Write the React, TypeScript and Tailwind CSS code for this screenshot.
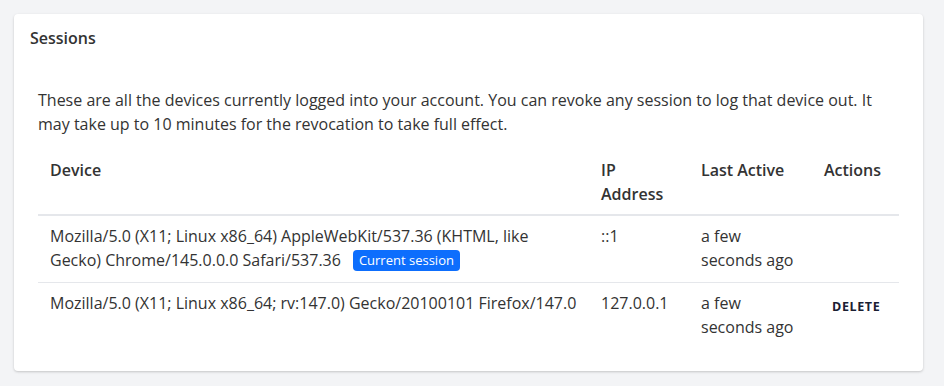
export default function App() {
  const sessions = [
    {
      device:
        "Mozilla/5.0 (X11; Linux x86_64) AppleWebKit/537.36 (KHTML, like Gecko) Chrome/145.0.0.0 Safari/537.36",
      ip: "::1",
      lastActive: "a few seconds ago",
      current: true,
    },
    {
      device: "Mozilla/5.0 (X11; Linux x86_64; rv:147.0) Gecko/20100101 Firefox/147.0",
      ip: "127.0.0.1",
      lastActive: "a few seconds ago",
      current: false,
    },
  ];

  return (
    <div
      className="min-h-[386px] bg-[#f3f4f6] pt-[14px] pl-[14px] text-[#333] text-base leading-6"
      style={{ fontFamily: '"Open Sans", "Noto Sans", sans-serif' }}
    >
      <div className="w-[909px] rounded bg-white shadow-[0_1px_3px_rgba(0,0,0,0.12),0_1px_2px_rgba(0,0,0,0.08)]">
        <div className="px-4 py-3">
          <h2 className="font-semibold">Sessions</h2>
        </div>
        <div className="px-6 pt-[26px] pb-[24px]">
          <p className="mb-[14px]">
            These are all the devices currently logged into your account. You can revoke any
            session to log that device out. It may take up to 10 minutes for the revocation to
            take full effect.
          </p>
          <table className="w-full table-fixed border-collapse text-left">
            <thead>
              <tr className="border-b-2 border-[#e5e7eb]">
                <th className="w-[551px] px-3 py-2 align-top font-semibold">Device</th>
                <th className="w-[100px] px-3 py-2 align-top font-semibold">IP Address</th>
                <th className="w-[123px] px-3 py-2 align-top font-semibold">Last Active</th>
                <th className="px-3 py-2 align-top font-semibold">Actions</th>
              </tr>
            </thead>
            <tbody>
              {sessions.map((s, i) => (
                <tr
                  key={s.ip}
                  className={i < sessions.length - 1 ? "border-b border-[#e5e7eb]" : ""}
                >
                  <td className={`px-3 align-top ${s.current ? "pt-2 pb-[10px]" : "py-2"}`}>
                    {s.device}
                    {s.current && (
                      <span className="ml-[12px] inline-block rounded bg-[#0d6efd] px-[6px] text-[13px] leading-[21px] text-white align-[1px]">
                        Current session
                      </span>
                    )}
                  </td>
                  <td className="px-3 py-2 align-top">{s.ip}</td>
                  <td className="px-3 py-2 align-top">{s.lastActive}</td>
                  <td className="px-3 py-2 align-top">
                    {!s.current && (
                      <button
                        type="button"
                        className="h-8 whitespace-nowrap px-2 text-[12.5px] font-bold uppercase tracking-[0.05em] text-[#1a2032]"
                      >
                        Delete
                      </button>
                    )}
                  </td>
                </tr>
              ))}
            </tbody>
          </table>
        </div>
      </div>
    </div>
  );
}
